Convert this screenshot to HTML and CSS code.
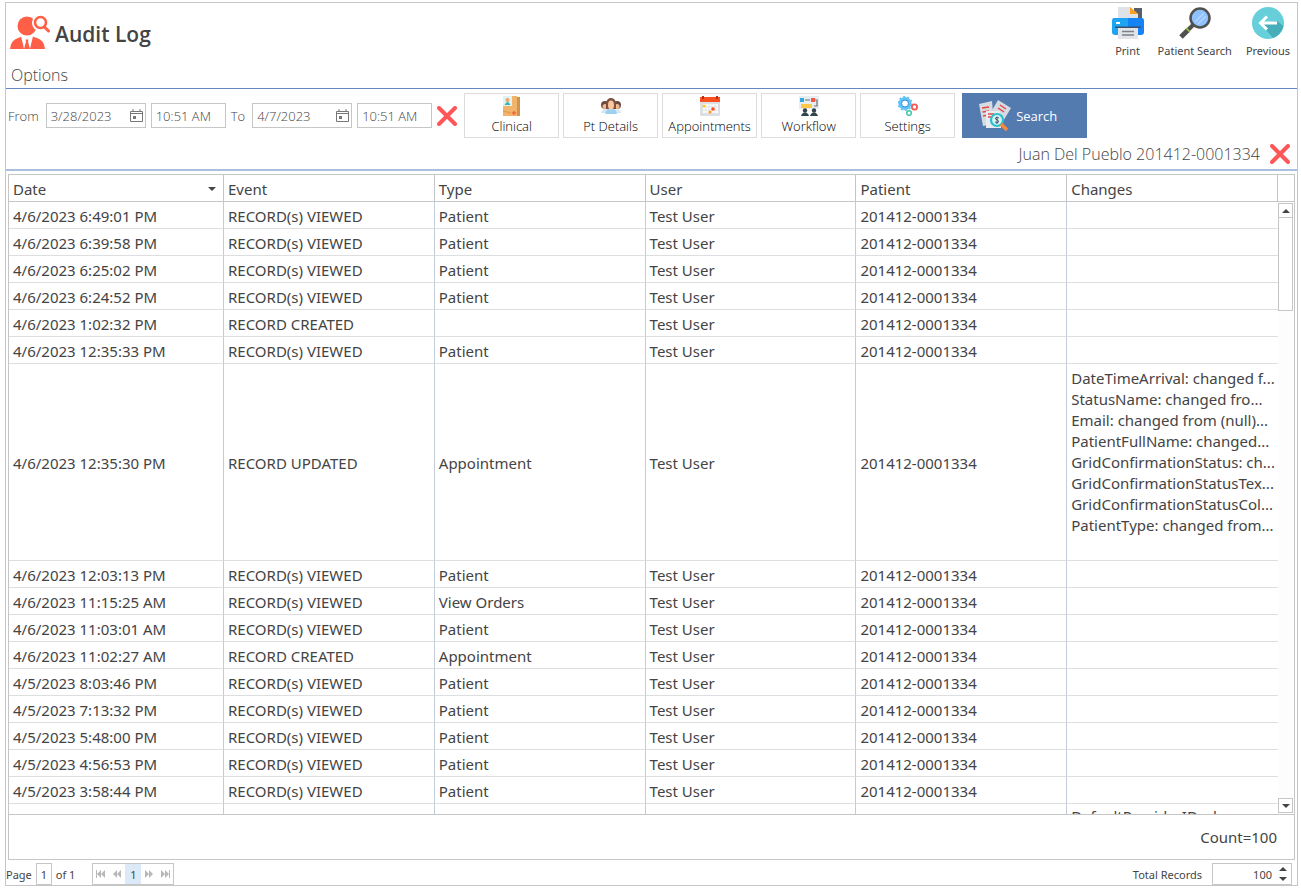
FILE: index.html
```html
<!DOCTYPE html>
<html lang="en">
<head>
  <meta charset="UTF-8" />
  <title>Audit Log</title>
  <link rel="stylesheet" href="styles.css">
</head>
<body>
  <main class="window">

    <header class="header">
      <div class="title-row">
        <svg class="title-icon" viewBox="0 0 40 36">
          <g fill="#ff5f46">
            <circle cx="17" cy="11" r="9.500"/>
            <path d="M0 34 Q1 25 8 23 L13 21 H21 L27 23 Q34 25 35 34 Z"/>
          </g>
          <path d="M11 21 H23 L20 34 H14 Z" fill="#fff"/>
          <path d="M15.500 24.500 H18.500 L18 26.500 L20 34 H14 L16 26.500 Z" fill="#ff5f46"/>
          <circle cx="30.500" cy="8" r="8.500" fill="#fff"/>
          <circle cx="30.500" cy="7.500" r="5.500" fill="none" stroke="#ff5f46" stroke-width="2.600"/>
          <path d="M34.500 12 L38.500 16" stroke="#ff5f46" stroke-width="3" stroke-linecap="round"/>
        </svg>
        <h1>Audit Log</h1>
        <nav class="tools">
          <button type="button" class="tool">
            <svg viewBox="0 0 32 32">
              <path d="M22 1 H30 V12 H22 Z" fill="#5a606a"/>
              <path d="M6 0 H18 L26 7 V14 H6 Z" fill="#dfe3e8"/>
              <path d="M18 0 L26 7 H18 Z" fill="#ff9f1f"/>
              <path d="M2 11 H16 V28 H3 Q0 28 0 25 V14 Q0 11 2 11Z" fill="#1da5f2"/>
              <path d="M16 11 H30 Q32 11 32 14 V25 Q32 28 29 28 H16Z" fill="#1483f5"/>
              <path d="M3 19.500 H29 V21 H3Z" fill="#3a4f6d"/>
              <path d="M4 15 H8 V17 H4Z" fill="#fff"/>
              <path d="M6 21 H26 V32 H6Z" fill="#e2e4e8"/>
              <path d="M10 24.500 H22 M10 28 H22" stroke="#7b8089" stroke-width="1.500"/>
            </svg>
            Print
          </button>
          <button type="button" class="tool">
            <svg viewBox="0 0 32 32">
              <path d="M2 30 L9 23" stroke="#50504c" stroke-width="5"/>
              <path d="M8 24 L15 17" stroke="#50504c" stroke-width="4"/>
              <path d="M7 21 L11 25" stroke="#a5cc45" stroke-width="1.500"/>
              <circle cx="21" cy="11" r="9.500" fill="#8fc0ff" stroke="#50504c" stroke-width="2.500"/>
              <path d="M16 15 L25 6 M19 17 L27 9" stroke="#b5d6ff" stroke-width="1.500"/>
            </svg>
            Patient Search
          </button>
          <button type="button" class="tool">
            <svg viewBox="0 0 32 32">
              <circle cx="16" cy="16" r="16" fill="#67cfd9"/>
              <path d="M9 17 L21 31 Q29 28 31.500 19 L25 14 Z" fill="#47adb8"/>
              <path d="M25 16 H9 M15 9.500 L8.500 16 L15 22.500" fill="none" stroke="#fff" stroke-width="3"/>
            </svg>
            Previous
          </button>
        </nav>
      </div>
      <h2>Options</h2>
    </header>

    <form class="filters">
      <div class="filter-row">
        <label for="fromDate">From</label>
        <div class="date-box">
          <input type="text" id="fromDate" value="3/28/2023">
          <svg class="cal" viewBox="0 0 13 13"><path d="M.5 2.500 H12.500 V12.500 H.5Z M.5 4.500 H12.500 M3 0 V3 M10 0 V3" fill="none" stroke="#777"/><path d="M3 7 H6 V10 H3Z" fill="#777"/></svg>
        </div>
        <input type="text" class="time-box" aria-label="From time" value="10:51 AM">
        <label for="toDate">To</label>
        <div class="date-box">
          <input type="text" id="toDate" value="4/7/2023">
          <svg class="cal" viewBox="0 0 13 13"><path d="M.5 2.500 H12.500 V12.500 H.5Z M.5 4.500 H12.500 M3 0 V3 M10 0 V3" fill="none" stroke="#777"/><path d="M3 7 H6 V10 H3Z" fill="#777"/></svg>
        </div>
        <input type="text" class="time-box" aria-label="To time" value="10:51 AM">
        <button type="button" class="clear" aria-label="Clear dates">
          <svg viewBox="0 0 20 20"><path d="M2 2 L18 18 M18 2 L2 18" stroke="#ff5757" stroke-width="4" stroke-linecap="round"/></svg>
        </button>

        <div class="categories">
          <button type="button" class="category">
            <svg viewBox="0 0 20 20">
              <path d="M1 0 H15 V20 H1Z" fill="#f2b36a"/><path d="M15 1 H18 V20 H15Z" fill="#cf9450"/>
              <path d="M1 0 H10 V10 H1Z" fill="#dff3f2"/><circle cx="5.500" cy="4" r="2" fill="#eea36e"/><path d="M2.500 9 Q5.500 3 8.500 9Z" fill="#37b5bb"/>
              <path d="M10 17 H14 M12 15 V19" stroke="#f4693f" stroke-width="1.500"/><path d="M1 15 L9 17" stroke="#dd9a50"/>
            </svg>
            Clinical
          </button>
          <button type="button" class="category">
            <svg viewBox="0 0 20 20">
              <circle cx="4" cy="9" r="4" fill="#6b4a40"/><circle cx="16" cy="9" r="4" fill="#6b4a40"/>
              <circle cx="4" cy="10.500" r="2.500" fill="#f4b88e"/><circle cx="16" cy="10.500" r="2.500" fill="#f4b88e"/>
              <path d="M0 17 Q1 13 5 13 H15 Q19 13 20 17Z" fill="#d5e6f3"/>
              <path d="M5 13 V7 Q6 2 10 2 Q14 2 15 7 V13Z" fill="#7a5143"/>
              <ellipse cx="10" cy="9" rx="3" ry="4.500" fill="#fac79e"/>
              <path d="M4 18 Q5 13 9 13 L10 15 L11 13 Q15 13 16 18Z" fill="#9bd0ef"/>
            </svg>
            Pt Details
          </button>
          <button type="button" class="category">
            <svg viewBox="0 0 20 20">
              <path d="M0 5 H20 V20 H0Z" fill="#dcdfe4"/><path d="M0 1 H20 V6 H0Z" fill="#fa501f"/>
              <path d="M3 0 V3 M17 0 V3" stroke="#b92d12" stroke-width="2"/>
              <path d="M3 8 H18 V17 H3Z" fill="#fff"/><path d="M6 8 V17 M9 8 V17 M12 8 V17 M15 8 V17 M3 11 H18 M3 14 H18" stroke="#d5d9df" stroke-width=".7"/>
              <circle cx="4" cy="10" r="1.600" fill="#ffc928"/><circle cx="13" cy="13" r="1.800" fill="#fa501f"/><circle cx="10" cy="16" r="1.600" fill="#ff9f1f"/>
            </svg>
            Appointments
          </button>
          <button type="button" class="category">
            <svg viewBox="0 0 20 20">
              <path d="M0 0 H20 V13 H0Z" fill="#e8edef"/><path d="M1 2 H5 V6 H1Z" fill="#32a9dc"/><path d="M12 2 H16 V6 H12Z" fill="#f15a4a"/>
              <path d="M6 4 H11 M16 4 H18 V10 H15" fill="none" stroke="#6a7478" stroke-width="1.200"/><path d="M2 8 H13 V12 H2Z" fill="#fec84b"/>
              <circle cx="6" cy="14.500" r="2.200" fill="#31454d"/><circle cx="15" cy="14.500" r="2.200" fill="#31454d"/>
              <path d="M2 20 Q3 16.500 6 16.500 Q9 16.500 10 20Z M11 20 Q12 16.500 15 16.500 Q18 16.500 19 20Z" fill="#31454d"/>
            </svg>
            Workflow
          </button>
          <button type="button" class="category">
            <svg viewBox="0 0 20 20">
              <circle cx="7" cy="7.500" r="5" fill="none" stroke="#61c3f6" stroke-width="3"/>
              <circle cx="7" cy="7.500" r="6.700" fill="none" stroke="#61c3f6" stroke-width="1.500" stroke-dasharray="2.200 2"/>
              <circle cx="7" cy="7.500" r="3.500" fill="none" stroke="#2c8ddd"/>
              <circle cx="16.500" cy="11" r="2.600" fill="none" stroke="#f35b4e" stroke-width="1.800"/>
              <circle cx="11" cy="17" r="2.300" fill="none" stroke="#45c8a8" stroke-width="1.600"/>
            </svg>
            Settings
          </button>
        </div>

        <button type="button" class="search">
          <svg viewBox="0 0 32 32">
            <path d="M0 4 L13 1 L15 24 L4 26Z" fill="#d6dbe2"/><path d="M19 0 L32 8 L23 23 L11 14Z" fill="#d6dbe2"/>
            <path d="M3 8 L10 7 M3.500 12 L10 11 M4 16 L9 15 M21 5 L27 9 M19 8 L25 12" stroke="#e84545" stroke-width="1.500"/>
            <path d="M7 11 H21 L22 28 H7Z" fill="#e8ebef"/><path d="M9 14 H15 M9 17 H13" stroke="#e84545" stroke-width="1.300"/>
            <circle cx="18" cy="20" r="6" fill="#d9f5f5" stroke="#27c0cc" stroke-width="2.200"/>
            <path d="M20 18 Q16 16.500 16.500 19 Q20 20 19.500 22 Q18 23.500 16 22 M18 16.500 V24" fill="none" stroke="#465367"/>
            <path d="M22 24 L28 30" stroke="#f68a3c" stroke-width="3.500"/>
          </svg>
          Search
        </button>
      </div>
      <div class="patient-row">
        <span>Juan Del Pueblo 201412-0001334</span>
        <button type="button" class="clear" aria-label="Clear patient">
          <svg viewBox="0 0 20 20"><path d="M2 2 L18 18 M18 2 L2 18" stroke="#ff5757" stroke-width="4" stroke-linecap="round"/></svg>
        </button>
      </div>
    </form>

    <section class="grid">
      <div class="grid-body">
        <div class="table-clip">
          <table>
            <thead>
              <tr>
                <th class="col-date"><span class="sorted">Date</span></th>
                <th>Event</th>
                <th>Type</th>
                <th>User</th>
                <th>Patient</th>
                <th>Changes</th>
              </tr>
            </thead>
            <tbody>
              <tr><td>4/6/2023 6:49:01 PM</td><td>RECORD(s) VIEWED</td><td>Patient</td><td>Test User</td><td>201412-0001334</td><td></td></tr>
              <tr><td>4/6/2023 6:39:58 PM</td><td>RECORD(s) VIEWED</td><td>Patient</td><td>Test User</td><td>201412-0001334</td><td></td></tr>
              <tr><td>4/6/2023 6:25:02 PM</td><td>RECORD(s) VIEWED</td><td>Patient</td><td>Test User</td><td>201412-0001334</td><td></td></tr>
              <tr><td>4/6/2023 6:24:52 PM</td><td>RECORD(s) VIEWED</td><td>Patient</td><td>Test User</td><td>201412-0001334</td><td></td></tr>
              <tr><td>4/6/2023 1:02:32 PM</td><td>RECORD CREATED</td><td></td><td>Test User</td><td>201412-0001334</td><td></td></tr>
              <tr><td>4/6/2023 12:35:33 PM</td><td>RECORD(s) VIEWED</td><td>Patient</td><td>Test User</td><td>201412-0001334</td><td></td></tr>
              <tr class="tall">
                <td>4/6/2023 12:35:30 PM</td><td>RECORD UPDATED</td><td>Appointment</td><td>Test User</td><td>201412-0001334</td>
                <td class="changes">DateTimeArrival: changed f...<br>StatusName: changed fro...<br>Email: changed from (null)...<br>PatientFullName: changed...<br>GridConfirmationStatus: ch...<br>GridConfirmationStatusTex...<br>GridConfirmationStatusCol...<br>PatientType: changed from...</td>
              </tr>
              <tr><td>4/6/2023 12:03:13 PM</td><td>RECORD(s) VIEWED</td><td>Patient</td><td>Test User</td><td>201412-0001334</td><td></td></tr>
              <tr><td>4/6/2023 11:15:25 AM</td><td>RECORD(s) VIEWED</td><td>View Orders</td><td>Test User</td><td>201412-0001334</td><td></td></tr>
              <tr><td>4/6/2023 11:03:01 AM</td><td>RECORD(s) VIEWED</td><td>Patient</td><td>Test User</td><td>201412-0001334</td><td></td></tr>
              <tr><td>4/6/2023 11:02:27 AM</td><td>RECORD CREATED</td><td>Appointment</td><td>Test User</td><td>201412-0001334</td><td></td></tr>
              <tr><td>4/5/2023 8:03:46 PM</td><td>RECORD(s) VIEWED</td><td>Patient</td><td>Test User</td><td>201412-0001334</td><td></td></tr>
              <tr><td>4/5/2023 7:13:32 PM</td><td>RECORD(s) VIEWED</td><td>Patient</td><td>Test User</td><td>201412-0001334</td><td></td></tr>
              <tr><td>4/5/2023 5:48:00 PM</td><td>RECORD(s) VIEWED</td><td>Patient</td><td>Test User</td><td>201412-0001334</td><td></td></tr>
              <tr><td>4/5/2023 4:56:53 PM</td><td>RECORD(s) VIEWED</td><td>Patient</td><td>Test User</td><td>201412-0001334</td><td></td></tr>
              <tr><td>4/5/2023 3:58:44 PM</td><td>RECORD(s) VIEWED</td><td>Patient</td><td>Test User</td><td>201412-0001334</td><td></td></tr>
              <tr class="tall"><td></td><td></td><td></td><td></td><td></td><td class="changes">DefaultProviderID: chan...</td></tr>
            </tbody>
          </table>
        </div>
        <div class="scroll-col">
          <div class="scroll-cap"></div>
          <div class="scrollbar">
            <button type="button" class="scroll-btn" aria-label="Scroll up"><i class="up"></i></button>
            <div class="thumb"></div>
            <button type="button" class="scroll-btn last" aria-label="Scroll down"><i class="down"></i></button>
          </div>
        </div>
      </div>
      <div class="summary">Count=100</div>
    </section>

    <footer class="pager">
      <label for="page">Page</label>
      <input type="text" id="page" class="page-box" value="1">
      <span>of 1</span>
      <div class="page-nav">
        <button type="button" aria-label="First page"><svg viewBox="0 0 10 8"><path d="M0 0 H1 V8 H0Z M5 0 V8 L1 4Z M9 0 V8 L5 4Z"/></svg></button>
        <button type="button" aria-label="Previous page"><svg viewBox="0 0 10 8"><path d="M5 0 V8 L1 4Z M9 0 V8 L5 4Z"/></svg></button>
        <button type="button" class="current">1</button>
        <button type="button" aria-label="Next page"><svg viewBox="0 0 10 8"><path d="M1 0 V8 L5 4Z M5 0 V8 L9 4Z"/></svg></button>
        <button type="button" aria-label="Last page"><svg viewBox="0 0 10 8"><path d="M1 0 V8 L5 4Z M5 0 V8 L9 4Z M9 0 H10 V8 H9Z"/></svg></button>
      </div>
      <label for="total" class="total-label">Total Records</label>
      <div class="total-box">
        <input type="text" id="total" value="100">
        <span class="spin"><i class="up"></i><i class="down"></i></span>
      </div>
    </footer>

  </main>
</body>
</html>
```

FILE: styles.css
```css
* {
  margin: 0;
  padding: 0;
  box-sizing: border-box;
}
body {
  height: 100vh;
  padding: 2px 3px 4px 5px;
  font-family: "Noto Sans", "Open Sans", sans-serif;
  font-size: 15px;
  color: #444;
  background: #fff;
}
button,
input {
  font: inherit;
  color: inherit;
  background: #fff;
  border: 0;
  border-radius: 0;
  min-width: 0;
}
svg {
  display: block;
  flex: none;
}

.window {
  display: flex;
  flex-direction: column;
  height: 100%;
  border: 1px solid #c6c6c6;
}

/* header */
.header {
  border-bottom: 1px solid #6288bf;
}
.title-row {
  display: flex;
  align-items: flex-start;
  height: 60px;
  padding: 4px 7px 0 4px;
}
.title-icon {
  width: 40px;
  height: 36px;
  margin-top: 8px;
}
h1 {
  margin-left: 5px;
  font-family: "Open Sans", sans-serif;
  font-size: 21px;
  line-height: 30px;
  font-weight: 600;
  padding-top: 12px;
}
h2 {
  padding-left: 5px;
  font-family: "Open Sans", sans-serif;
  font-size: 16px;
  line-height: 25px;
  font-weight: 300;
}
.tools {
  display: flex;
  gap: 14px;
  margin-left: auto;
}
.tool {
  display: flex;
  flex-direction: column;
  align-items: center;
  gap: 4px;
  font-size: 11px;
  line-height: 16px;
}
.tool svg {
  width: 32px;
  height: 32px;
}

/* filters */
.filters {
  font-family: "Open Sans", sans-serif;
  font-size: 13px;
  font-weight: 300;
  border-bottom: 2px solid #a9c1df;
}
.filter-row {
  display: flex;
  align-items: center;
  gap: 5px;
  padding: 4px 2px 0;
}
.filter-row label {
  padding-right: 2px;
}
.date-box {
  display: flex;
  align-items: center;
  width: 100px;
  height: 25px;
  padding: 0 2px 0 4px;
  border: 1px solid #c6c6c6;
}
.date-box input {
  flex: 1;
}
.cal {
  width: 13px;
  height: 13px;
}
.time-box {
  width: 75px;
  height: 25px;
  padding: 0 4px;
  border: 1px solid #c6c6c6;
}
.clear svg {
  width: 20px;
  height: 20px;
}
.categories {
  display: flex;
  gap: 4px;
  margin: 0 2px;
}
.category {
  display: flex;
  flex-direction: column;
  align-items: center;
  width: 95px;
  height: 45px;
  padding-top: 2px;
  line-height: 20px;
  color: #000;
  border: 1px solid #dcdcdc;
}
.category svg {
  width: 20px;
  height: 20px;
}
.search {
  display: flex;
  align-items: center;
  gap: 5px;
  width: 125px;
  height: 45px;
  padding-left: 17px;
  font-weight: 400;
  color: #fff;
  background: #537bb0;
}
.search svg {
  width: 32px;
  height: 32px;
}
.patient-row {
  display: flex;
  justify-content: flex-end;
  align-items: center;
  gap: 10px;
  height: 31px;
  padding-right: 7px;
  font-size: 16px;
}

/* grid */
.grid {
  display: flex;
  flex-direction: column;
  flex: 1;
  min-height: 0;
  margin: 3px 2px 0;
  border: 1px solid #c6c6c6;
}
.grid-body {
  display: flex;
  flex: 1;
  min-height: 0;
}
.table-clip {
  flex: 1;
  overflow: hidden;
}
table {
  width: 100%;
  table-layout: fixed;
  border-collapse: separate;
  border-spacing: 0;
}
th,
td {
  height: 27px;
  padding: 2px 4px 0;
  line-height: 21px;
  font-weight: 400;
  text-align: left;
  white-space: nowrap;
  overflow: hidden;
  border-right: 1px solid #c3cbd8;
  border-bottom: 1px solid #dcdee0;
}
th {
  border-color: #c6c6c6;
}
td:last-child {
  border-right: 0;
}
.col-date {
  width: 215px;
}
.sorted {
  display: flex;
  align-items: center;
  justify-content: space-between;
}
.sorted::after {
  content: "";
  margin-right: 3px;
  border: 4px solid transparent;
  border-top-color: #444;
  border-bottom: 0;
}
.tall td {
  height: 197px;
}
.tall .changes {
  padding-top: 4px;
  vertical-align: top;
}
/* last row is only partly in view */
.tall:last-child .changes {
  padding-top: 2px;
}

.up,
.down {
  display: block;
  border: 4px solid transparent;
}
.up {
  border-top: 0;
  border-bottom-color: #444;
}
.down {
  border-bottom: 0;
  border-top-color: #444;
}

.scroll-col {
  display: flex;
  flex-direction: column;
  width: 16px;
}
.scroll-cap {
  height: 27px;
  border-bottom: 1px solid #c6c6c6;
}
.scrollbar {
  display: flex;
  flex-direction: column;
  flex: 1;
  width: 15px;
  padding: 1px 0;
  background: #fdfdfd;
}
.scroll-btn {
  display: flex;
  align-items: center;
  justify-content: center;
  height: 15px;
  border: 1px solid #c6c6c6;
}
.last {
  margin-top: auto;
}
.thumb {
  height: 93px;
  background: #fff;
  border: 1px solid #c6c6c6;
  border-top: 0;
}
.summary {
  height: 45px;
  padding-right: 17px;
  line-height: 44px;
  text-align: right;
  border-top: 1px solid #c6c6c6;
}

/* pager */
.pager {
  display: flex;
  align-items: center;
  gap: 4px;
  height: 25px;
  padding: 3px 5px 0 0;
  font-size: 11px;
}
.page-box {
  width: 16px;
  height: 22px;
  text-align: center;
  border: 1px solid #c6c6c6;
}
.page-nav {
  display: flex;
  height: 22px;
  margin-left: 13px;
  border: 1px solid #c6c6c6;
}
.page-nav button {
  display: flex;
  align-items: center;
  justify-content: center;
  width: 16px;
}
.page-nav svg {
  width: 10px;
  height: 8px;
  fill: #b8b8b8;
}
.page-nav .current {
  background: #dceaf8;
}
.total-label {
  margin-left: auto;
}
.total-box {
  display: flex;
  align-items: center;
  width: 80px;
  height: 22px;
  margin-left: 6px;
  padding-right: 4px;
  border: 1px solid #c6c6c6;
}
.total-box input {
  flex: 1;
  padding-right: 7px;
  text-align: right;
}
.spin {
  display: flex;
  flex-direction: column;
  gap: 6px;
}
```
